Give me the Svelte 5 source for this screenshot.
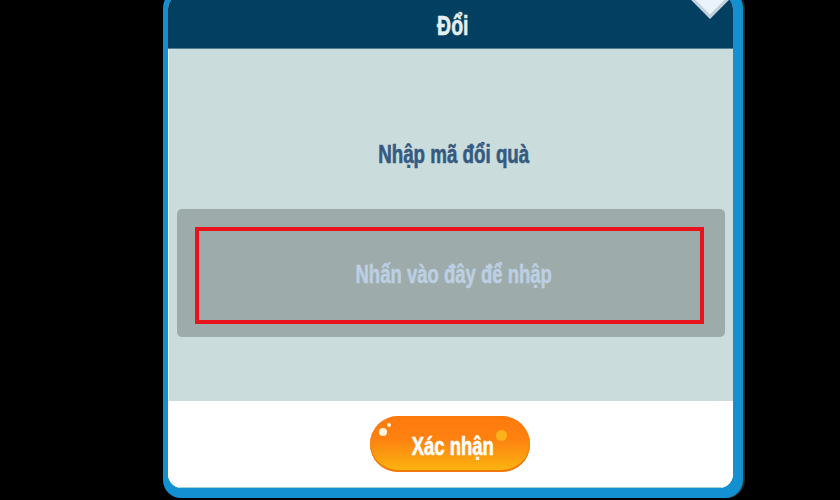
<script>
  const title = 'Đổi';
  const label = 'Nhập mã đổi quà';
  const placeholder = 'Nhấn vào đây để nhập';
  const action = 'Xác nhận';
</script>

<div class="page">
  <section class="panel">
    <div class="inner">
      <div class="diamond"></div>
      <header class="head"><h1>{title}</h1></header>
      <div class="body">
        <p class="label"><span>{label}</span></p>
        <div class="field">
          <div class="focus"><span>{placeholder}</span></div>
        </div>
      </div>
      <footer class="foot">
        <button class="confirm" type="button">
          <i class="dot big"></i><i class="dot small"></i><i class="glow"></i>
          <span>{action}</span>
        </button>
      </footer>
    </div>
  </section>
</div>

<style>
  :global(body) { margin: 0; background: #000; }
  .page {
    width: 840px;
    height: 500px;
    overflow: hidden;
    background: #000;
    padding-left: 163px;
    box-sizing: border-box;
    font-family: "Liberation Sans", sans-serif;
  }
  .panel {
    width: 565px;
    height: 493px;
    margin-top: -10px;
    box-sizing: content-box;
    padding: 5px 10px 10px 5px;
    border-radius: 18px;
    box-shadow: 2px 0 0 #2b2b2b;
    background: #1290d2;
  }
  .inner {
    position: relative;
    height: 100%;
    border-radius: 14px;
    background: #fff;
    display: flex;
    flex-direction: column;
    overflow: hidden;
  }
  .diamond {
    position: absolute;
    left: 526px;
    top: -15px;
    width: 32px;
    height: 32px;
    box-sizing: border-box;
    background: #eaf3fb;
    border: 3px solid #c3d0dc;
    transform: rotate(45deg);
    z-index: 2;
  }
  .head {
    height: 54px;
    flex: none;
    background: #033f60;
    display: flex;
    align-items: flex-end;
    justify-content: center;
    box-sizing: border-box;
    padding-bottom: 6px;
    padding-left: 4px;
    border-bottom: 1px solid #55808f;
  }
  h1 {
    margin: 0;
    color: #e6eff0;
    font-size: 27px;
    line-height: 32px;
    font-weight: 700;
    transform: scaleX(0.72);
    -webkit-text-stroke: 0.6px #e6eff0;
  }
  .body {
    height: 352px;
    flex: none;
    background: #cbdcdc;
    box-shadow: inset 1px 0 0 #e4f0f0;
    box-sizing: border-box;
    padding: 0 8px 0 9px;
    display: flex;
    flex-direction: column;
  }
  .label {
    margin: 85px 0 0;
    height: 40px;
    display: flex;
    justify-content: center;
    padding-left: 5px;
    color: #355a82;
    font-size: 25px;
    line-height: 40px;
    font-weight: 700;
  }
  .label span {
    display: block;
    white-space: nowrap;
    transform: scaleX(0.75);
    -webkit-text-stroke: 0.6px #355a82;
  }
  .field {
    margin-top: 35px;
    height: 128px;
    background: #9dabaa;
    border-radius: 5px;
    box-sizing: border-box;
    padding: 18px 0 0 18px;
  }
  .focus {
    width: 509px;
    height: 97px;
    box-sizing: border-box;
    border: 4px solid #e8131b;
    padding: 0 0 2px 8px;
    display: flex;
    align-items: center;
    justify-content: center;
  }
  .focus span {
    display: block;
    white-space: nowrap;
    color: #bccfe3;
    font-size: 25px;
    font-weight: 700;
    transform: scaleX(0.74);
    -webkit-text-stroke: 0.6px #bccfe3;
  }
  .foot {
    flex: 1;
    background: #fff;
    display: flex;
    justify-content: center;
    align-items: flex-start;
    padding-top: 15px;
    padding-right: 1px;
    box-shadow: inset 0 -1px 0 #9fd0d8;
  }
  .confirm {
    position: relative;
    width: 160px;
    height: 56px;
    padding: 0;
    border: 0;
    border-radius: 28px;
    background: linear-gradient(180deg, #ff7a0e 0%, #fe8110 40%, #fba010 75%, #fdb60f 100%);
    box-shadow: inset 0 -2px 0 #f0780c, inset 0 0 2px #f1730b;
    color: #fff;
    font-family: inherit;
    font-size: 26px;
    font-weight: 700;
  }
  .confirm span {
    position: relative;
    top: 2px;
    left: 3px;
    display: inline-block;
    white-space: nowrap;
    transform: scaleX(0.71);
    -webkit-text-stroke: 0.6px #fff;
  }
  .dot { position: absolute; border-radius: 50%; background: #fff3dd; }
  .big { left: 9px; top: 12px; width: 8px; height: 8px; }
  .small { left: 17px; top: 7px; width: 4px; height: 4px; }
  .glow {
    position: absolute;
    right: 23px;
    top: 14px;
    width: 11px;
    height: 11px;
    border-radius: 50%;
    background: #fcb31a;
  }
</style>
